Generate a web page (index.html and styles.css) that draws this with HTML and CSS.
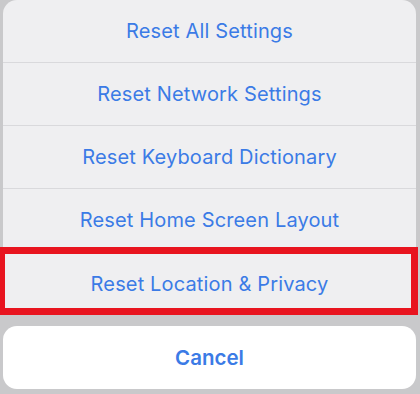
FILE: index.html
```html
<!DOCTYPE html>
<html>
<head>
<meta charset="utf-8">
<link rel="stylesheet" href="styles.css">
</head>
<body>
<div class="screen">
  <div class="sheet">
    <div class="row">Reset All Settings</div>
    <div class="row">Reset Network Settings</div>
    <div class="row">Reset Keyboard Dictionary</div>
    <div class="row">Reset Home Screen Layout</div>
    <div class="row highlighted">Reset Location &amp; Privacy</div>
  </div>
  <div class="cancel">Cancel</div>
</div>
</body>
</html>
```
FILE: styles.css
```css
html, body {
  margin: 0;
  padding: 0;
  background: #c9c9cb;
}
.screen {
  width: 420px;
  height: 394px;
  box-sizing: border-box;
  padding: 0 4px 0 3px;
  display: flex;
  flex-direction: column;
  gap: 11px;
  font-family: Inter, "Liberation Sans", sans-serif;
}
.sheet {
  background: #efeff1;
  border-radius: 14px;
  display: flex;
  flex-direction: column;
}
.row {
  height: 62px;
  display: flex;
  align-items: center;
  justify-content: center;
  color: #3b7be6;
  font-size: 20px;
  letter-spacing: 0.15px;
  border-bottom: 1px solid #d9d9dc;
  position: relative;
}
.row:last-child {
  border-bottom: none;
  height: 63px;
}
.highlighted::after {
  content: "";
  position: absolute;
  top: -5px;
  left: -5px;
  right: -2px;
  bottom: 0;
  border: 7px solid #e8141f;
}
.cancel {
  height: 63px;
  background: #ffffff;
  border-radius: 14px;
  display: flex;
  align-items: center;
  justify-content: center;
  color: #3b7be6;
  font-size: 20.5px;
  font-weight: 600;
}
```
